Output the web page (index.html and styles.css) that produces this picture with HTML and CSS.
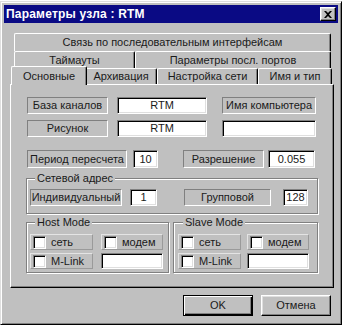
FILE: index.html
```html
<!DOCTYPE html>
<html lang="ru">
<head>
<meta charset="utf-8">
<title>Параметры узла : RTM</title>
<link rel="stylesheet" href="styles.css">
</head>
<body>
<div class="dlg">
  <div class="title">
    <span class="ttext">Параметры узла : RTM</span>
    <div class="close"><svg width="8" height="7" viewBox="0 0 8 7"><path d="M0 0h2l2 2 2-2h2L5 3.5 8 7H6L4 5 2 7H0l3-3.5z" fill="#000"/></svg></div>
  </div>
  <div class="client">
    <div class="tabs">
      <div class="trow r1"><div class="tab grow">Связь по последовательным интерфейсам</div></div>
      <div class="trow r2"><div class="tab w-taim">Таймауты</div><div class="tab grow">Параметры посл. портов</div></div>
      <div class="trow r3">
        <div class="tab w-osn active">Основные</div>
        <div class="tab w-arh">Архивация</div>
        <div class="tab w-net">Настройка сети</div>
        <div class="tab grow">Имя и тип</div>
      </div>
    </div>
    <div class="panel">
      <div class="frow rowa">
        <div class="lbl w81">База каналов</div>
        <div class="inp w90 ml9">RTM</div>
        <div class="lbl w94 ml15">Имя компьютера</div>
      </div>
      <div class="frow rowb">
        <div class="lbl w81">Рисунок</div>
        <div class="inp w90 ml9">RTM</div>
        <div class="inp w94 ml15"></div>
      </div>
      <div class="frow rowc">
        <div class="lbl w100">Период пересчета</div>
        <div class="inp w25 ml6">10</div>
        <div class="lbl w81 ml25">Разрешение</div>
        <div class="inp w47 ml4">0.055</div>
      </div>
      <fieldset class="grp g1">
        <legend>Сетевой адрес</legend>
        <div class="frow">
          <div class="lbl w92">Индивидуальный</div>
          <div class="inp w27 ml8">1</div>
          <div class="lbl w87 ml27">Групповой</div>
          <div class="inp w25 ml12">128</div>
        </div>
      </fieldset>
      <div class="modes">
        <fieldset class="grp host">
          <legend>Host Mode</legend>
          <div class="mrow">
            <div class="cell"><span class="chk"></span>сеть</div>
            <div class="cell c2"><span class="chk"></span>модем</div>
          </div>
          <div class="mrow">
            <div class="cell"><span class="chk"></span>M-Link</div>
            <div class="inp c2 mi"></div>
          </div>
        </fieldset>
        <fieldset class="grp slave">
          <legend>Slave Mode</legend>
          <div class="mrow">
            <div class="cell"><span class="chk"></span>сеть</div>
            <div class="cell c2"><span class="chk"></span>модем</div>
          </div>
          <div class="mrow">
            <div class="cell"><span class="chk"></span>M-Link</div>
            <div class="inp c2 mi"></div>
          </div>
        </fieldset>
      </div>
    </div>
    <div class="btns">
      <div class="btn def">OK</div>
      <div class="btn">Отмена</div>
    </div>
  </div>
</div>
</body>
</html>
```

FILE: styles.css
```css
html, body { margin: 0; background: #fff; }
body { font: 11px/13px "Liberation Sans", Arial, sans-serif; color: #1a1a1a; }

.dlg {
  box-sizing: border-box;
  width: 342px;
  height: 324px;
  margin-top: 1px;
  padding: 3px;
  background: #c0c0c0;
  border: 1px solid;
  border-color: #dfdfdf #000 #000 #dfdfdf;
  box-shadow: inset 1px 1px #fff, inset -1px -1px #808080;
}

.title {
  height: 18px;
  background: #0a0a84;
  color: #fff;
  display: flex;
  align-items: center;
  justify-content: space-between;
  padding: 0 2px 0 2px;
}
.ttext { font-weight: bold; font-size: 12px; letter-spacing: 0.2px; }
.close {
  box-sizing: border-box;
  width: 16px;
  height: 14px;
  background: #c0c0c0;
  border: 1px solid;
  border-color: #fff #000 #000 #fff;
  box-shadow: inset -1px -1px #808080, inset 1px 1px #dfdfdf;
  display: flex;
  align-items: center;
  justify-content: center;
}

.client { padding: 10px 4px 0 6px; }

.tabs { display: flex; flex-direction: column; }
.trow { display: flex; height: 17px; }
.r1 { height: 18px; margin: 0 3px 0 4px; }
.r2 { margin: 0 3px 0 4px; }
.r3 { height: 16px; margin: 0 2px 0 3px; }

.tab {
  box-sizing: border-box;
  border-top: 1px solid #fff;
  border-left: 1px solid #fff;
  border-right: 1px solid #000;
  box-shadow: inset -1px 0 #808080;
  border-radius: 2px 2px 0 0;
  background: #c0c0c0;
  display: flex;
  align-items: center;
  justify-content: center;
  white-space: nowrap;
}
.grow { flex: 1; }
.w-taim { width: 121px; }
.w-osn { width: 72px; }
.w-arh { width: 72px; }
.w-net { width: 101px; }
.tab.active {
  position: relative;
  z-index: 1;
  width: 76px;
  height: 19px;
  margin: -2px -2px 0 -2px;
  flex: none;
}

.panel {
  box-sizing: border-box;
  height: 204px;
  padding: 12px 0 0 15px;
  border: 1px solid;
  border-color: #fff #000 #000 #fff;
  box-shadow: inset -1px -1px #808080;
}

.frow { display: flex; height: 17px; }
.rowa, .rowb, .rowc { margin-left: 1px; }
.rowb { margin-top: 6px; }
.rowc { margin-top: 13px; height: 18px; }

.lbl, .inp {
  box-sizing: border-box;
  height: 100%;
  border: 1px solid;
  display: flex;
  align-items: center;
  justify-content: center;
  white-space: nowrap;
}
.lbl { border-color: #808080 #fff #fff #808080; }
.inp {
  background: #fff;
  border-color: #808080 #fff #fff #808080;
  box-shadow: inset 1px 1px #000, inset -1px -1px #dfdfdf;
}

.w25 { width: 25px; } .w27 { width: 27px; } .w47 { width: 47px; }
.w81 { width: 81px; } .w87 { width: 87px; } .w90 { width: 90px; }
.w92 { width: 92px; } .w94 { width: 94px; } .w100 { width: 100px; }
.ml4 { margin-left: 4px; } .ml6 { margin-left: 6px; } .ml8 { margin-left: 8px; }
.ml9 { margin-left: 9px; } .ml12 { margin-left: 12px; } .ml15 { margin-left: 15px; }
.ml25 { margin-left: 25px; } .ml27 { margin-left: 27px; }

.grp {
  margin: 0;
  padding: 0 3px;
  min-width: 0;
  border: 1px solid #808080;
  box-shadow: inset 1px 1px #fff, 1px 1px #fff;
}
.grp legend {
  padding: 0 2px;
  margin-left: 5px;
  line-height: 13px;
  background: #c0c0c0;
}
.g1 {
  width: 292px;
  box-sizing: border-box;
  margin-top: 4px;
  padding-top: 4px;
  padding-bottom: 7px;
}

.modes { display: flex; margin-top: 2px; }
.host, .slave {
  box-sizing: border-box;
  padding-top: 5px;
  padding-bottom: 3px;
}
.host { width: 143px; margin-right: 4px; }
.slave { width: 145px; padding-left: 4px; }

.mrow { display: flex; height: 16px; }
.mrow + .mrow { margin-top: 3px; }
.cell {
  box-sizing: border-box;
  width: 63px;
  height: 16px;
  border: 1px solid;
  border-color: #e4e4e4 #9a9a9a #9a9a9a #e4e4e4;
  display: flex;
  align-items: center;
  gap: 5px;
  padding-left: 2px;
  white-space: nowrap;
}
.c2 { width: 62px; margin-left: 8px; }
.slave .c2 { margin-left: 6px; }
.mi { height: 16px; }
.chk {
  box-sizing: border-box;
  flex: none;
  width: 13px;
  height: 13px;
  background: #fff;
  border: 1px solid;
  border-color: #808080 #fff #fff #808080;
  box-shadow: inset 1px 1px #000, inset -1px -1px #dfdfdf;
}

.btns {
  display: flex;
  justify-content: flex-end;
  gap: 8px;
  margin-top: 7px;
  padding-right: 3px;
}
.btn {
  box-sizing: border-box;
  width: 70px;
  height: 21px;
  background: #c0c0c0;
  border: 1px solid;
  border-color: #fff #000 #000 #fff;
  box-shadow: inset -1px -1px #808080, inset 1px 1px #dfdfdf;
  display: flex;
  align-items: center;
  justify-content: center;
}
.btn.def {
  border-color: #000;
  box-shadow: inset 1px 1px #fff, inset -1px -1px #000, inset -2px -2px #808080;
}
```
